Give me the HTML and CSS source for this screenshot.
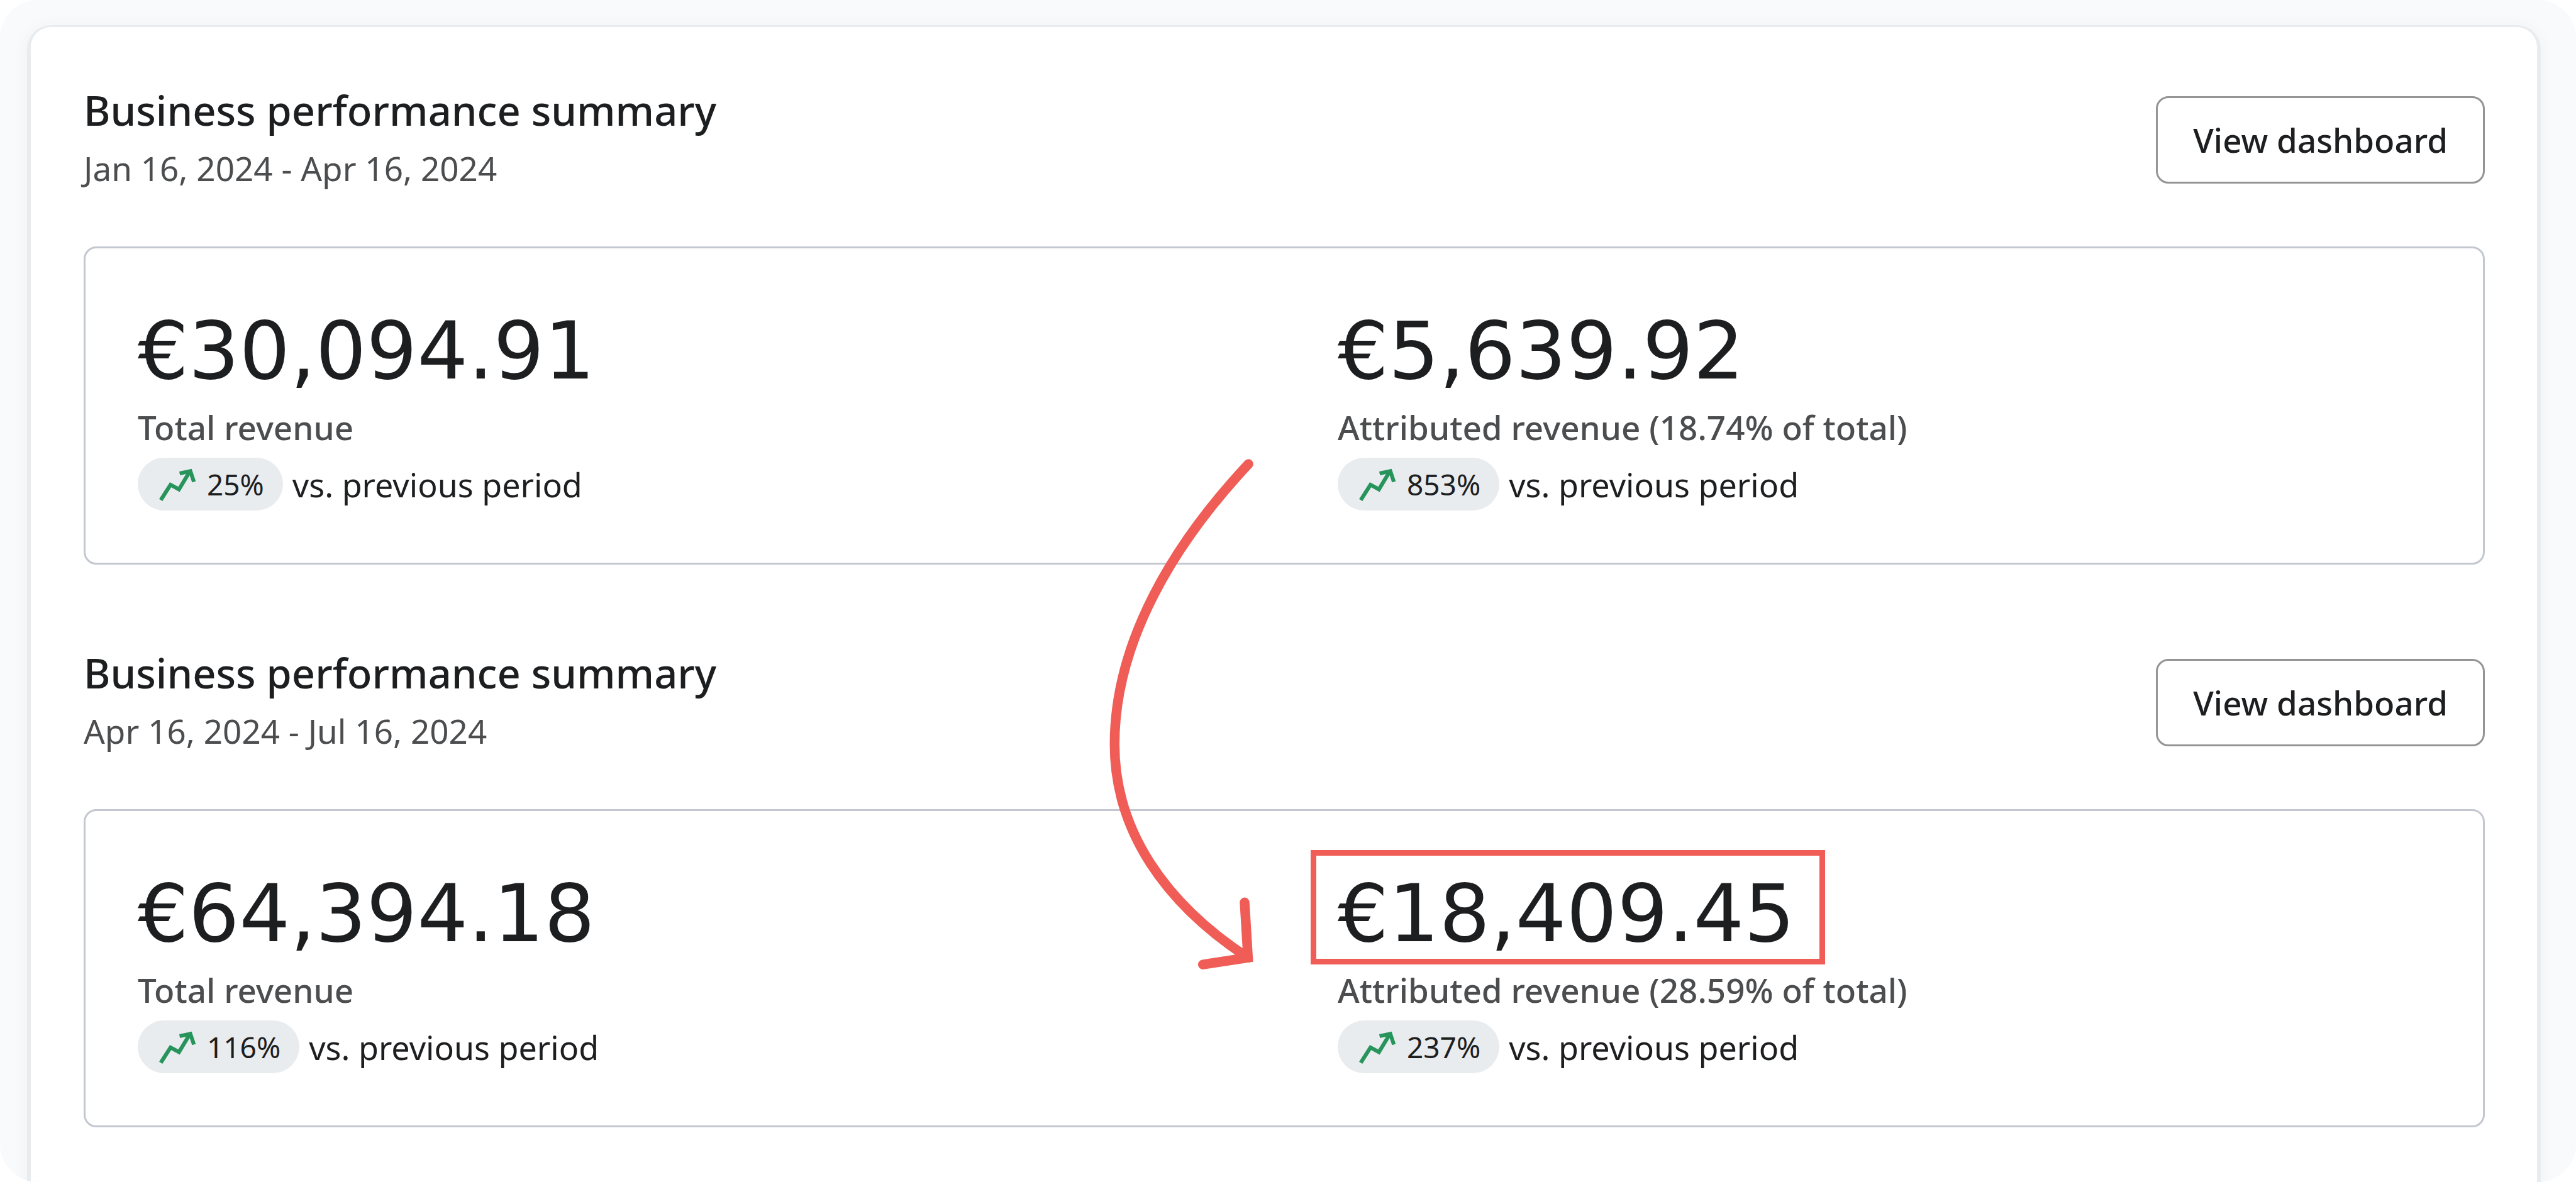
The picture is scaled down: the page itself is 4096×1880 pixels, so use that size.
FILE: index.html
```html
<!DOCTYPE html>
<html lang="en">
<head>
  <meta charset="utf-8">
  <title>Business performance summary</title>
  <meta name="viewport" content="width=device-width, initial-scale=1">
  <link rel="stylesheet" href="styles.css">
</head>
<body>
  <svg width="0" height="0" class="sprite" aria-hidden="true">
    <symbol id="trend-up" viewBox="0 0 240 220">
      <path d="M18 206 L78 112 L130 140 L198 28" />
      <path d="M134 42 L200 28 L222 94" />
    </symbol>
  </svg>

  <div class="page">
    <main class="panel">
      <section class="summary">
        <div class="summary-header">
          <div>
            <h2 class="summary-title">Business performance summary</h2>
            <p class="summary-dates">Jan 16, 2024 - Apr 16, 2024</p>
          </div>
          <button type="button" class="btn">View dashboard</button>
        </div>
        <div class="metrics">
          <div class="metric">
            <div class="metric-value"><span>€30,094.91</span></div>
            <div class="metric-label">Total revenue</div>
            <div class="metric-change">
              <span class="pill"><svg class="pill-icon" aria-hidden="true"><use href="#trend-up" /></svg>25%</span>
              <span>vs. previous period</span>
            </div>
          </div>
          <div class="metric">
            <div class="metric-value"><span>€5,639.92</span></div>
            <div class="metric-label">Attributed revenue (18.74% of total)</div>
            <div class="metric-change">
              <span class="pill"><svg class="pill-icon" aria-hidden="true"><use href="#trend-up" /></svg>853%</span>
              <span>vs. previous period</span>
            </div>
          </div>
        </div>
      </section>

      <section class="summary">
        <div class="summary-header">
          <div>
            <h2 class="summary-title">Business performance summary</h2>
            <p class="summary-dates">Apr 16, 2024 - Jul 16, 2024</p>
          </div>
          <button type="button" class="btn">View dashboard</button>
        </div>
        <div class="metrics">
          <div class="metric">
            <div class="metric-value"><span>€64,394.18</span></div>
            <div class="metric-label">Total revenue</div>
            <div class="metric-change">
              <span class="pill"><svg class="pill-icon" aria-hidden="true"><use href="#trend-up" /></svg>116%</span>
              <span>vs. previous period</span>
            </div>
          </div>
          <div class="metric">
            <div class="metric-value"><span class="highlight">€18,409.45</span></div>
            <div class="metric-label">Attributed revenue (28.59% of total)</div>
            <div class="metric-change">
              <span class="pill"><svg class="pill-icon" aria-hidden="true"><use href="#trend-up" /></svg>237%</span>
              <span>vs. previous period</span>
            </div>
          </div>
        </div>
      </section>

      <!-- arrow from the first period to the second one -->
      <svg class="arrow" viewBox="2270 930 330 1080" aria-hidden="true">
        <path class="arrow-line" d="M2572 956 C2420 1118 2296 1320 2296 1534 C2296 1712 2400 1862 2571 1974" />
        <path class="arrow-line" d="M2564 1860 L2571 1974 L2478 1988" />
      </svg>
    </main>
  </div>
</body>
</html>
```

FILE: styles.css
```css
* {
  box-sizing: border-box;
  margin: 0;
  padding: 0;
}

body {
  font-family: "Noto Sans", "Open Sans", sans-serif;
  font-size: 53px;
  color: #1d1e20;
  background-color: #fff;
}

.sprite {
  position: absolute;
}

.page {
  display: flex;
  min-height: 100vh;
  padding: 43px 62px 0 49px;
  background-color: #f9fafc;
  border-radius: 60px;
  overflow: hidden;
}

.panel {
  position: relative;
  flex: 1;
  padding: 86px 83px 0 84px;
  background-color: #fff;
  border-radius: 32px 32px 0 0;
  box-shadow: 0 3px 0 6px #e9ecef, 0 6px 24px 8px rgba(0, 0, 0, 0.04);
}

.summary + .summary {
  margin-top: 126px;
}

.summary-header {
  display: flex;
  align-items: center;
  justify-content: space-between;
  margin-bottom: 77px;
}

.summary-title {
  font-size: 65px;
  font-weight: 500;
  line-height: 92px;
}

.summary-dates {
  color: #4c4d4f;
  line-height: 94px;
}

.btn {
  height: 139px;
  padding: 0 56px;
  font-family: inherit;
  font-size: 53px;
  font-weight: 500;
  color: #1d1e20;
  background-color: #fff;
  border: 3px solid #949494;
  border-radius: 20px;
}

.metrics {
  display: grid;
  grid-template-columns: 1fr 1fr;
  gap: 170px;
  padding: 83px;
  border: 3px solid #c3c7cf;
  border-radius: 20px;
}

.metric-value {
  font-family: "DejaVu Sans", Verdana, sans-serif;
  font-size: 127px;
  line-height: 160px;
}

.metric-label {
  font-weight: 500;
  line-height: 84px;
  color: #4c4d4f;
}

.metric-change {
  display: flex;
  align-items: center;
  gap: 15px;
  margin-top: 6px;
  font-size: 52px;
}

.pill {
  display: flex;
  align-items: center;
  gap: 16px;
  height: 84px;
  padding: 0 30px 0 32px;
  font-size: 46px;
  background-color: #e9ecef;
  border-radius: 42px;
}

.pill-icon {
  width: 62px;
  height: 57px;
  fill: none;
  stroke: #27945c;
  stroke-width: 24;
}

.highlight {
  position: relative;
  display: inline-block;
}

.highlight::after {
  content: "";
  position: absolute;
  inset: -21px -48px -1px -43px;
  border: 9px solid #f05d57;
}

.arrow {
  position: absolute;
  top: 675px;
  left: 1703px;
  width: 255px;
  height: 833px;
}

.arrow-line {
  fill: none;
  stroke: #f05d57;
  stroke-width: 20;
  stroke-linecap: round;
}
```
